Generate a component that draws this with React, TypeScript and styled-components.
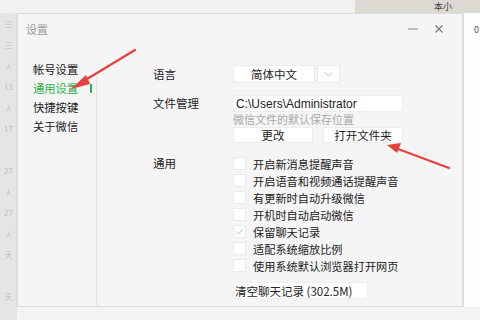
import React from "react";
import styled, { createGlobalStyle } from "styled-components";

const Global = createGlobalStyle`
  html, body { margin: 0; padding: 0; }
  body {
    width: 480px; height: 320px; overflow: hidden;
    background: #eeeeee;
    font-family: "Noto Sans CJK SC", "Noto Sans", sans-serif;
    color: #222;
  }
`;

const Page = styled.div`
  position: relative;
  width: 480px;
  height: 320px;
  display: flex;
  flex-direction: column;
  overflow: hidden;
`;

const TopStrip = styled.div`
  height: 13px;
  display: flex;
  flex-shrink: 0;
`;

const TopPlain = styled.div`
  width: 355px;
  background: #f1f1f1;
`;

const TopTable = styled.div`
  flex: 1;
  background: #dcd9d3;
  display: flex;
  align-items: center;
  font-size: 9px;
  color: #444;
  padding-left: 79px;
`;

const MiddleRow = styled.div`
  display: flex;
  height: 294px;
  flex-shrink: 0;
`;

const LeftStrip = styled.div`
  width: 17px;
  background: #e5e5e5;
  display: flex;
  flex-direction: column;
  align-items: center;
  gap: 11px;
  padding-top: 6px;
  font-size: 8px;
  line-height: 10px;
  color: #bdbdbd;
  box-sizing: border-box;
  overflow: hidden;
`;

const Dialog = styled.div`
  width: 446px;
  background: #f5f5f5;
  border: 1px solid #dcdcdc;
  box-sizing: border-box;
  display: flex;
  flex-direction: column;
  box-shadow: 0 1px 2px rgba(0,0,0,0.08);
`;

const TitleBar = styled.div`
  height: 29px;
  display: flex;
  align-items: center;
  padding: 0 10px 0 8px;
  font-size: 11px;
  color: #9a9a9a;
`;

const TitleText = styled.span`
  flex: 1;
`;

const WinButton = styled.span<{ $w: number }>`
  width: ${p => p.$w}px;
  display: flex;
  justify-content: center;
  color: #777;
  font-size: 12px;
`;

const Body = styled.div`
  flex: 1;
  display: flex;
`;

const Sidebar = styled.div`
  width: 78px;
  padding: 17px 0 0 15px;
  box-sizing: border-box;
  display: flex;
  flex-direction: column;
`;

const NavItem = styled.div<{ $active?: boolean }>`
  height: 19px;
  line-height: 19px;
  font-size: 11.3px;
  color: ${p => (p.$active ? "#2fb24a" : "#222")};
  display: flex;
  align-items: center;
  gap: 12px;
  white-space: nowrap;
`;

const ActiveMark = styled.span`
  width: 1.5px;
  height: 9px;
  background: #2fb24a;
`;

const Divider = styled.div`
  width: 1px;
  margin-top: 34px;
  background: #e2e2e2;
`;

const Content = styled.div`
  flex: 1;
  padding: 22px 0 0 56px;
  display: grid;
  grid-template-columns: 80px 1fr;
  grid-auto-rows: min-content;
  font-size: 11.3px;
`;

const Label = styled.div<{ $top: number }>`
  padding-top: ${p => p.$top}px;
  line-height: 17px;
  font-size: 11.5px;
  color: #222;
`;

const Controls = styled.div<{ $mb: number }>`
  display: flex;
  flex-direction: column;
  margin-bottom: ${p => p.$mb}px;
`;

const SelectRow = styled.div`
  display: flex;
  gap: 2px;
`;

const SelectBox = styled.div`
  width: 82px;
  height: 18px;
  background: #fff;
  border: 1px solid #eaeaea;
  box-sizing: border-box;
  display: flex;
  align-items: center;
  justify-content: center;
  font-size: 11.5px;
`;

const ArrowBox = styled.div`
  width: 23px;
  height: 18px;
  background: #fff;
  border: 1px solid #eaeaea;
  box-sizing: border-box;
  display: flex;
  align-items: center;
  justify-content: center;
`;

const PathInput = styled.div`
  width: 170px;
  height: 17px;
  background: #fff;
  border: 1px solid #eeeeee;
  box-sizing: border-box;
  padding-left: 2px;
  display: flex;
  align-items: center;
  font-family: "Liberation Sans", "Noto Sans", sans-serif;
  font-size: 12px;
  color: #222;
`;

const Hint = styled.div`
  font-size: 11px;
  color: #a8a8a8;
  line-height: 14px;
`;

const ButtonRow = styled.div`
  display: flex;
  gap: 10px;
  margin-top: 1px;
`;

const Button = styled.div<{ $w: number }>`
  width: ${p => p.$w}px;
  height: 16px;
  background: #fff;
  border: 1px solid #ececec;
  box-sizing: border-box;
  display: flex;
  align-items: center;
  justify-content: center;
  font-size: 11.5px;
  color: #222;
  white-space: nowrap;
`;

const CheckList = styled.div`
  display: flex;
  flex-direction: column;
`;

const CheckRow = styled.div`
  height: 17px;
  display: flex;
  align-items: center;
  gap: 7px;
  font-size: 11.2px;
  white-space: nowrap;
  color: #222;
`;

const Box = styled.span`
  width: 13px;
  height: 13px;
  background: #fff;
  border: 1px solid #eaeaea;
  box-sizing: border-box;
  display: flex;
  align-items: center;
  justify-content: center;
`;

const ClearButton = styled.div`
  margin-top: 8px;
  width: 135px;
  height: 17px;
  background: #fff;
  border: 1px solid #efefef;
  box-sizing: border-box;
  display: flex;
  align-items: center;
  padding-left: 1px;
  font-size: 11.5px;
  color: #222;
  white-space: nowrap;
`;

const RightPanel = styled.div`
  flex: 1;
  background: #fdfdfd;
  border-left: 1px solid #e0e0e0;
  padding: 10px 0 0 10px;
  font-size: 9px;
  color: #555;
`;

const BottomStrip = styled.div`
  flex: 1;
  display: flex;
`;

const BottomLeft = styled.div`
  width: 17px;
  background: #e5e5e5;
`;

const BottomMain = styled.div`
  flex: 1;
  background: #f3f3f3;
`;

const Overlay = styled.svg`
  position: absolute;
  left: 0;
  top: 0;
  pointer-events: none;
`;

const checks = [
  { text: "开启新消息提醒声音", on: false },
  { text: "开启语音和视频通话提醒声音", on: false },
  { text: "有更新时自动升级微信", on: false },
  { text: "开机时自动启动微信", on: false },
  { text: "保留聊天记录", on: true },
  { text: "适配系统缩放比例", on: false },
  { text: "使用系统默认浏览器打开网页", on: false },
];

const stripMarks = ["三", "三", "⅄", "13", "⅄", "17", "", "27", "⅄", "27", "⅄", "天", "", "天"];

export default function App() {
  return (
    <>
      <Global />
      <Page>
        <TopStrip>
          <TopPlain />
          <TopTable>本小</TopTable>
        </TopStrip>
        <MiddleRow>
          <LeftStrip>
            {stripMarks.map((m, i) => (
              <span key={i}>{m || "\u00a0"}</span>
            ))}
          </LeftStrip>
          <Dialog>
            <TitleBar>
              <TitleText>设置</TitleText>
              <WinButton $w={26}>
                <svg width="10" height="2" viewBox="0 0 10 2">
                  <rect x="0" y="0.5" width="10" height="1" fill="#888" />
                </svg>
              </WinButton>
              <WinButton $w={26}>
                <svg width="8" height="8" viewBox="0 0 8 8">
                  <path d="M0.5 0.5L7.5 7.5M7.5 0.5L0.5 7.5" stroke="#777" strokeWidth="1.1" />
                </svg>
              </WinButton>
            </TitleBar>
            <Body>
              <Sidebar>
                <NavItem>帐号设置</NavItem>
                <NavItem $active>
                  通用设置
                  <ActiveMark />
                </NavItem>
                <NavItem>快捷按键</NavItem>
                <NavItem>关于微信</NavItem>
              </Sidebar>
              <Divider />
              <Content>
                <Label $top={1}>语言</Label>
                <Controls $mb={12}>
                  <SelectRow>
                    <SelectBox>简体中文</SelectBox>
                    <ArrowBox>
                      <svg width="9" height="5" viewBox="0 0 9 5">
                        <path d="M0.5 0.5L4.5 4L8.5 0.5" stroke="#bbb" fill="none" strokeWidth="1" />
                      </svg>
                    </ArrowBox>
                  </SelectRow>
                </Controls>
                <Label $top={0}>文件管理</Label>
                <Controls $mb={12}>
                  <PathInput>C:\Users\Administrator</PathInput>
                  <Hint>微信文件的默认保存位置</Hint>
                  <ButtonRow>
                    <Button $w={80}>更改</Button>
                    <Button $w={80}>打开文件夹</Button>
                  </ButtonRow>
                </Controls>
                <Label $top={0}>通用</Label>
                <Controls $mb={0}>
                  <CheckList>
                    {checks.map(c => (
                      <CheckRow key={c.text}>
                        <Box>
                          {c.on && (
                            <svg width="9" height="7" viewBox="0 0 9 7">
                              <path d="M1 3.5L3.5 6L8 1" stroke="#a9c9b0" fill="none" strokeWidth="1" />
                            </svg>
                          )}
                        </Box>
                        {c.text}
                      </CheckRow>
                    ))}
                  </CheckList>
                  <ClearButton>清空聊天记录 (302.5M)</ClearButton>
                </Controls>
              </Content>
            </Body>
          </Dialog>
          <RightPanel>0</RightPanel>
        </MiddleRow>
        <BottomStrip>
          <BottomLeft />
          <BottomMain />
        </BottomStrip>
        <Overlay width="480" height="320" viewBox="0 0 480 320">
          <path d="M135 50 L82 82" stroke="#e8403f" strokeWidth="2.2" strokeLinecap="round" />
          <path d="M71 89 L86 75 L90 84 Z" fill="#e8403f" />
          <path d="M449 168 L398 149" stroke="#e8403f" strokeWidth="2.2" strokeLinecap="round" />
          <path d="M387 145 L401 143 L397 153 Z" fill="#e8403f" />
        </Overlay>
      </Page>
    </>
  );
}
